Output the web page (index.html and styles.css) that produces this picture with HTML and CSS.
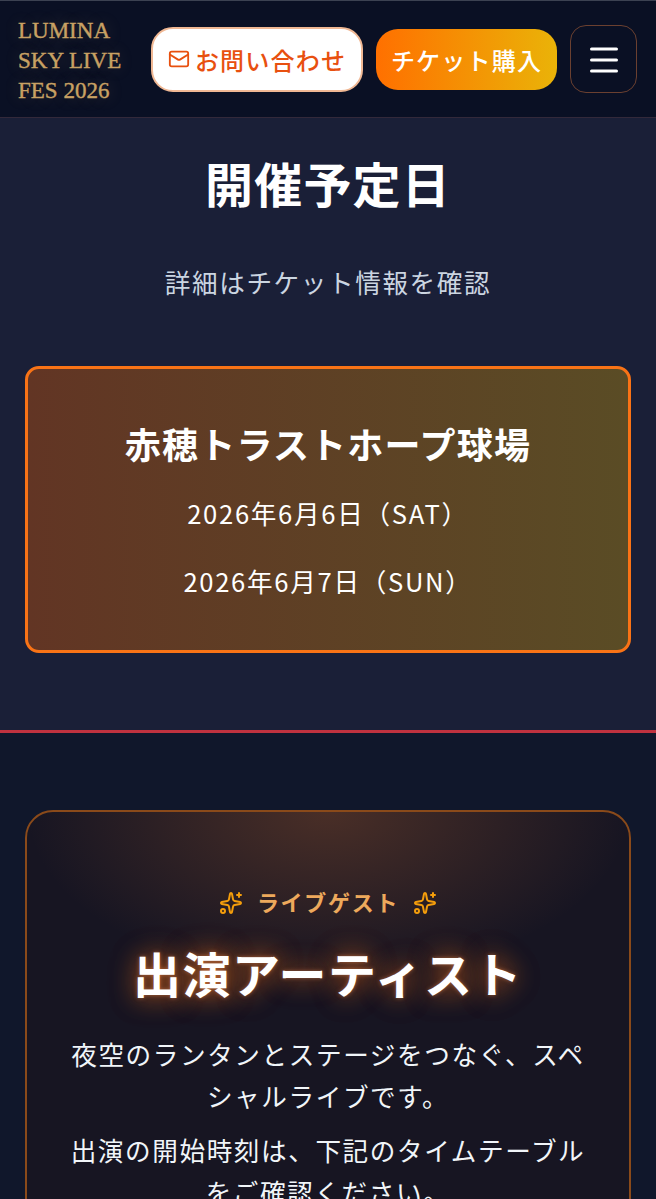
FILE: index.html
```html
<!doctype html>
<html lang="ja">
<head>
	<meta charset="utf-8"/>
	<title>LUMINA SKY LIVE FES 2026</title>
	<link rel="stylesheet" href="styles.css">
</head>
<body>
	<header class="site-header">
		<a class="logo">LUMINA<br/>SKY LIVE<br/>FES 2026</a>
		<a class="btn btn-contact">
			<svg class="mail-icon" viewBox="0 0 24 24"><rect x="2" y="4" width="20" height="16" rx="2"/><path d="m22 7-8.97 5.7a1.94 1.94 0 0 1-2.06 0L2 7"/></svg>
			お問い合わせ
		</a>
		<a class="btn btn-ticket">チケット購入</a>
		<button class="menu-btn">
			<svg class="menu-icon" viewBox="0 0 28 24"><path d="M1.5 2h25M1.5 13h25M1.5 24h25"/></svg>
		</button>
	</header>

	<section class="dates">
		<h1>開催予定日</h1>
		<p class="dates-sub">詳細はチケット情報を確認</p>
		<div class="venue-card">
			<h2>赤穂トラストホープ球場</h2>
			<p>2026年6月6日（SAT）</p>
			<p>2026年6月7日（SUN）</p>
		</div>
	</section>

	<section class="artists">
		<div class="artist-card">
			<div class="eyebrow">
				<svg class="spark" viewBox="0 0 24 24"><path d="M11.017 2.814a1 1 0 0 1 1.966 0l1.051 5.558a2 2 0 0 0 1.594 1.594l5.558 1.051a1 1 0 0 1 0 1.966l-5.558 1.051a2 2 0 0 0-1.594 1.594l-1.051 5.558a1 1 0 0 1-1.966 0l-1.051-5.558a2 2 0 0 0-1.594-1.594l-5.558-1.051a1 1 0 0 1 0-1.966l5.558-1.051a2 2 0 0 0 1.594-1.594z"/><path d="M20 2v4M22 4h-4"/><circle cx="4" cy="20" r="2"/></svg>
				<span>ライブゲスト</span>
				<svg class="spark" viewBox="0 0 24 24"><path d="M11.017 2.814a1 1 0 0 1 1.966 0l1.051 5.558a2 2 0 0 0 1.594 1.594l5.558 1.051a1 1 0 0 1 0 1.966l-5.558 1.051a2 2 0 0 0-1.594 1.594l-1.051 5.558a1 1 0 0 1-1.966 0l-1.051-5.558a2 2 0 0 0-1.594-1.594l-5.558-1.051a1 1 0 0 1 0-1.966l5.558-1.051a2 2 0 0 0 1.594-1.594z"/><path d="M20 2v4M22 4h-4"/><circle cx="4" cy="20" r="2"/></svg>
			</div>
			<h2>出演アーティスト</h2>
			<p>夜空のランタンとステージをつなぐ、スペシャルライブです。</p>
			<p>出演の開始時刻は、下記のタイムテーブルをご確認ください。</p>
		</div>
	</section>
</body>
</html>
```

FILE: styles.css
```css
html, body {
    margin: 0;
    height: 1199px;
    overflow: hidden;
}
body {
    background: #10172b;
    color: #fff;
    font-family: "Noto Sans CJK JP", "Noto Sans", sans-serif;
}
h1, h2, p {
    margin: 0;
}

/* header */
.site-header {
    display: flex;
    align-items: center;
    height: 116px;
    padding: 0 19px 0 18px;
    background: #0a1024;
    border-top: 1px solid #3c4252;
    border-bottom: 1px solid #33293a;
}
.logo {
    width: 133px;
    flex: none;
    padding-top: 4px;
    font-family: "Liberation Serif", serif;
    font-size: 23px;
    line-height: 30px;
    color: #c8a163;
    -webkit-text-stroke: .4px #c8a163;
    text-shadow: 0 0 16px rgba(200, 160, 100, .3);
}
.btn {
    display: flex;
    align-items: center;
    justify-content: center;
    flex: none;
    box-sizing: border-box;
    font-size: 24px;
    font-weight: 500;
    letter-spacing: 1.2px;
}
.btn-contact {
    width: 212px;
    height: 65px;
    gap: 5px;
    background: #fff;
    border: 2px solid #f0b894;
    border-radius: 22px;
    color: #e8500f;
}
.mail-icon {
    width: 22px;
    height: 22px;
    fill: none;
    stroke: #e8500f;
    stroke-width: 2;
    stroke-linecap: round;
    stroke-linejoin: round;
}
.btn-ticket {
    width: 181px;
    height: 61px;
    margin-left: 13px;
    border-radius: 22px;
    background: linear-gradient(90deg, #ff7000, #eab308);
}
.menu-btn {
    display: flex;
    align-items: center;
    justify-content: center;
    flex: none;
    box-sizing: border-box;
    width: 67px;
    height: 68px;
    margin-left: 13px;
    padding: 0;
    background: transparent;
    border: 1.5px solid #6b4030;
    border-radius: 16px;
}
.menu-icon {
    width: 28px;
    height: 26px;
    overflow: visible;
    fill: none;
    stroke: #fff;
    stroke-width: 3;
    stroke-linecap: round;
}

/* dates */
.dates {
    box-sizing: border-box;
    height: 615px;
    padding: 0 25px;
    background: #1a1f37;
    border-bottom: 3px solid #c0323f;
    text-align: center;
}
.dates h1 {
    padding-top: 28px;
    font-size: 48px;
    line-height: 72px;
    font-weight: 700;
    letter-spacing: 1.2px;
}
.dates-sub {
    margin-top: 45px;
    font-size: 25.6px;
    line-height: 38px;
    letter-spacing: 1.6px;
    color: #cbd5e1;
}
.venue-card {
    box-sizing: border-box;
    height: 287px;
    margin-top: 65px;
    padding-top: 49px;
    background: linear-gradient(90deg, #623524, #5a4c25);
    border: 3px solid #f97316;
    border-radius: 14px;
}
.venue-card h2 {
    font-size: 36px;
    line-height: 50px;
    font-weight: 700;
    letter-spacing: 1.2px;
    margin-bottom: 26px;
}
.venue-card p {
    font-size: 25.6px;
    line-height: 38px;
    margin-bottom: 30px;
    letter-spacing: 1.7px;
}

/* artists */
.artists {
    padding: 77px 25px 0;
}
.artist-card {
    box-sizing: border-box;
    height: 600px;
    padding: 68px 40px 0;
    background: radial-gradient(ellipse 50% 28% at 50% 0, rgba(190, 105, 50, .3), transparent), #171522;
    border: 2px solid #8a4a1a;
    border-radius: 28px;
    text-align: center;
}
.eyebrow {
    display: flex;
    align-items: center;
    justify-content: center;
    gap: 14px;
    font-size: 22px;
    line-height: 42px;
    font-weight: 700;
    letter-spacing: 1.7px;
    color: #eda95c;
}
.spark {
    width: 24px;
    height: 24px;
    margin-top: 3px;
    fill: none;
    stroke: #f59e0b;
    stroke-width: 2;
    stroke-linecap: round;
    stroke-linejoin: round;
}
.artist-card h2 {
    margin: 14px 0 25px;
    font-size: 48px;
    line-height: 72px;
    font-weight: 700;
    letter-spacing: 1.5px;
    text-shadow: 0 0 4px rgba(255, 150, 90, .5), 0 0 24px rgba(249, 115, 22, .6), 0 0 30px rgba(249, 115, 22, .35);
}
.artist-card p {
    font-size: 25.6px;
    line-height: 42px;
    letter-spacing: 1.6px;
    margin-bottom: 12px;
    color: #f1f5f9;
}
```
